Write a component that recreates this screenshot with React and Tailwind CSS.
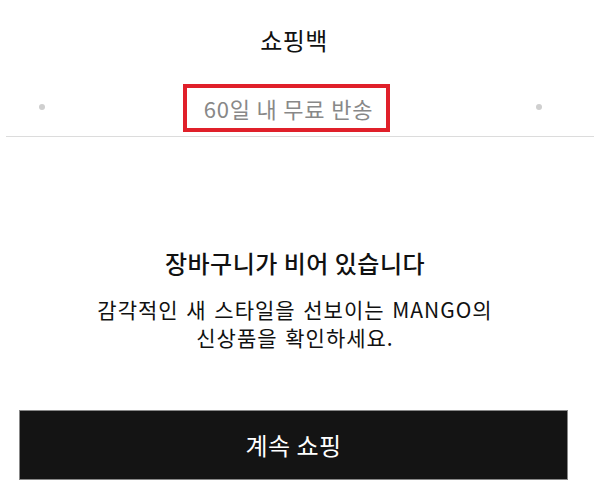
export default function App() {
  return (
    <div className="w-[600px] h-[491px] bg-white overflow-hidden flex flex-col" style={{ fontFamily: '"Noto Sans CJK KR", "Noto Sans", sans-serif' }}>
      <div className="h-[80px] flex items-start justify-center pt-[28px] pr-[12px]">
        <h1 className="text-[24px] text-[#111] font-normal leading-none tracking-[0.5px]">쇼핑백</h1>
      </div>
      <div className="relative h-[57px] flex items-start justify-start border-b border-[#dcdcdc] mx-[6px]">
        <span className="absolute left-[33px] top-[24px] w-[6px] h-[6px] rounded-full bg-[#cfcfcf]"></span>
        <div className="mt-[4px] ml-[177px] w-[207px] h-[48px] border-[4px] border-[#e0202a] flex items-center justify-center">
          <span className="text-[22px] text-[#888] leading-none pl-[4px] tracking-[0.8px]">60일 내 무료 반송</span>
        </div>
        <span className="absolute right-[52px] top-[24px] w-[6px] h-[6px] rounded-full bg-[#cfcfcf]"></span>
      </div>
      <div className="flex flex-col items-center pt-[114px] pr-[10px]">
        <h2 className="text-[24px] font-medium text-[#111] leading-none tracking-[0.5px]">장바구니가 비어 있습니다</h2>
        <p className="mt-[20px] text-[21px] text-[#111] leading-[28px] text-center tracking-[1px] [word-spacing:2px]">
          감각적인 새 스타일을 선보이는 MANGO의<br />신상품을 확인하세요.
        </p>
      </div>
      <div className="mt-[59px] ml-[19px] w-[549px] h-[70px] bg-[#141414] border border-[#888] flex items-center justify-center">
        <span className="text-white text-[24px] leading-none tracking-[0.5px]">계속 쇼핑</span>
      </div>
    </div>
  );
}
